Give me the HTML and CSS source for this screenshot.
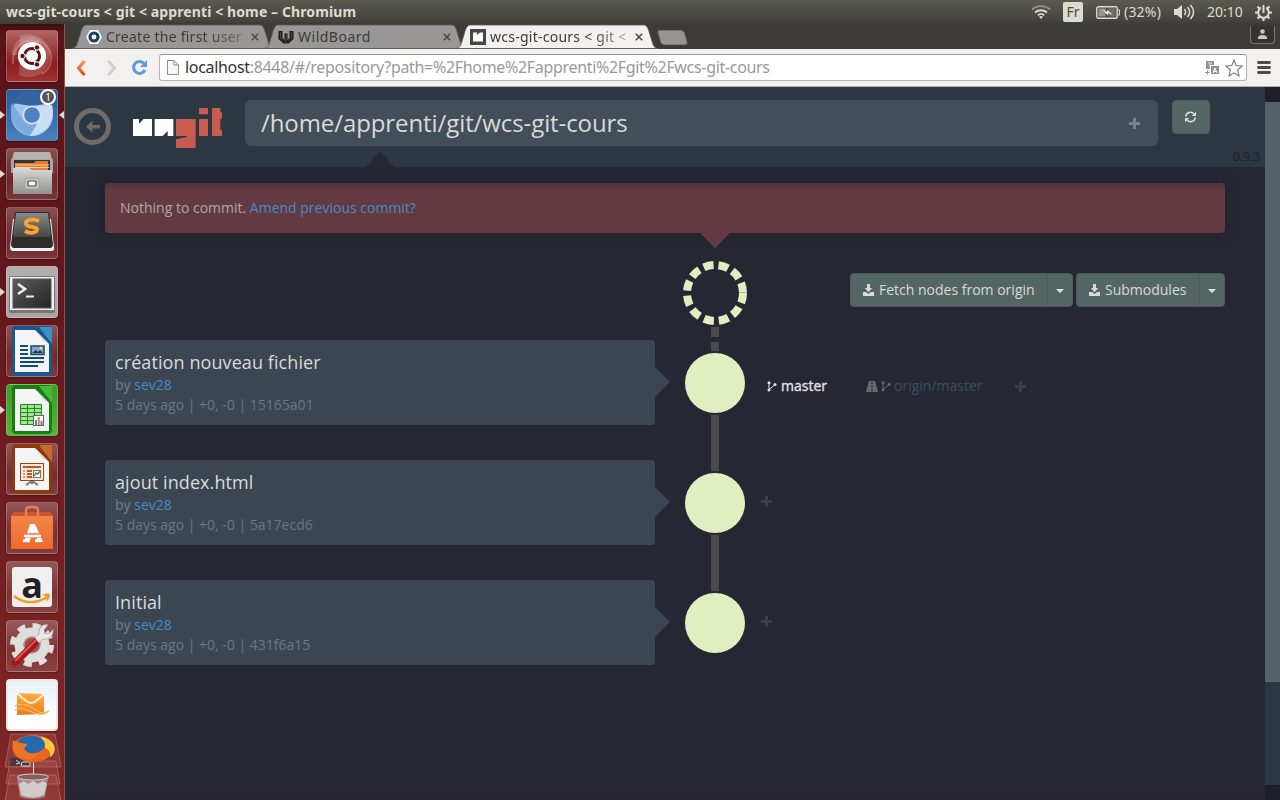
FILE: index.html
```html
<!DOCTYPE html>
<html lang="fr">
<head>
<meta charset="utf-8">
<title>wcs-git-cours &lt; git &lt; apprenti &lt; home</title>
<link rel="stylesheet" href="styles.css">
</head>
<body>
<svg class="defs" width="0" height="0" aria-hidden="true">
  <defs>
    <linearGradient id="steel" x1="0" y1="0" x2="0" y2="1"><stop offset="0" stop-color="#d8d8d6"/><stop offset="1" stop-color="#929292"/></linearGradient>
    <linearGradient id="dark" x1="0" y1="0" x2="1" y2="1"><stop offset="0" stop-color="#5c5c5c"/><stop offset="1" stop-color="#242424"/></linearGradient>
    <linearGradient id="key" x1="0" y1="0" x2="0" y2="1"><stop offset="0" stop-color="#888"/><stop offset="1" stop-color="#474747"/></linearGradient>
    <linearGradient id="orange" x1="0" y1="0" x2="0" y2="1"><stop offset="0" stop-color="#f5854a"/><stop offset="1" stop-color="#ee6a2a"/></linearGradient>
    <linearGradient id="mail" x1="0" y1="0" x2="0" y2="1"><stop offset="0" stop-color="#fcb23c"/><stop offset="1" stop-color="#ef7a22"/></linearGradient>
    <linearGradient id="back" x1="0" y1="0" x2="0" y2="1"><stop offset="0" stop-color="#f0975d"/><stop offset="1" stop-color="#dc4a1c"/></linearGradient>
    <symbol id="plus" viewBox="0 0 11 11"><path d="M4 0h3v4h4v3H7v4H4V7H0V4h4z" fill="currentColor"/></symbol>
    <symbol id="branch" viewBox="0 0 10 11"><g fill="currentColor"><circle cx="2" cy="1.700" r="1.500"/><circle cx="2" cy="9" r="1.500"/><circle cx="8" cy="3.500" r="1.500"/></g><path d="M2 2v7M2.500 8 5 6.200 7.500 4" fill="none" stroke="currentColor" stroke-width="1"/></symbol>
    <symbol id="save" viewBox="0 0 11 12"><path d="M4 0h3v4h2.200L5.500 8.300 1.800 4H4zM0 8h3l2.500 2L8 8h3v4H0z" fill="currentColor"/></symbol>
    <symbol id="cross" viewBox="0 0 8 8"><path d="m.8.800 6.400 6.400M7.200.800.800 7.200" stroke="currentColor" stroke-width="1.500"/></symbol>
    <symbol id="tab" viewBox="0 0 202 25"><path d="M0 24.500C5 24 5 20 7 14S10 1 14 1h174c4 0 5 7 7 13s2 10 7 10.500z" fill="currentColor" stroke="#5b5a57" stroke-width=".8"/></symbol>
  </defs>
</svg>

<header class="panel">
  <span class="panel-title">wcs-git-cours &lt; git &lt; apprenti &lt; home – Chromium</span>
  <div class="indicators">
    <svg class="wifi" width="20" height="14" viewBox="0 0 20 14"><g fill="none" stroke="#dfdbd2" stroke-width="1.800"><path d="M1 4.500C6 0 14 0 19 4.500" opacity=".5"/><path d="M4 7.500c3.500-3 8.500-3 12 0M6.800 10.300c2-1.700 4.400-1.700 6.400 0"/></g><path d="m10 14-2-2.200c1-1 3-1 4 0z" fill="#dfdbd2"/></svg>
    <span class="lang">Fr</span>
    <svg class="battery" width="24" height="13" viewBox="0 0 24 13"><rect x=".8" y=".8" width="20.400" height="11.400" rx="1.500" fill="none" stroke="#dfdbd2" stroke-width="1.400"/><path d="M22 4h1.500v5H22" fill="none" stroke="#dfdbd2"/><path d="M2.500 2.500h7v8h-7z" fill="#dfdbd2" opacity=".5"/><path d="M12 2.500h7.500v8H12z" fill="#dfdbd2" opacity=".25"/><path d="m6 3 5 3V4l6 5-5-2v2.500z" fill="#f4f1ea"/></svg>
    <span class="percent">(32%)</span>
    <svg class="volume" width="21" height="16" viewBox="0 0 21 16"><path d="M0 5h3l5-4v14l-5-4H0z" fill="#dfdbd2"/><path d="M10.500 5c1.500 2 1.500 4 0 6M13.500 3c3 3.500 3 6.500 0 10M16.500 1c4 4.500 4 9.500 0 14" fill="none" stroke="#dfdbd2" stroke-width="1.500"/></svg>
    <span class="clock">20:10</span>
    <svg class="power" width="17" height="17" viewBox="0 0 17 17"><circle cx="8.500" cy="8.500" r="5.300" fill="none" stroke="#dfdbd2" stroke-width="2"/><path d="M8.500 14v3M0 8.500h3M14 8.500h3M2.500 2.500l2 2M14.500 2.500l-2 2M2.500 14.500l2-2M14.500 14.500l-2-2" stroke="#dfdbd2" stroke-width="2.200"/><path d="M8.500 0v8.500" stroke="#504e46" stroke-width="5"/><path d="M8.500 1v8" stroke="#dfdbd2" stroke-width="2"/></svg>
  </div>
</header>

<div class="desktop">
  <nav class="launcher">
    <div class="tile ubuntu"><svg viewBox="0 0 52 52"><path d="M7 34C6 15 20 6 37 13c14 10 8 27-2 31" fill="none" stroke="#d58380" stroke-width="2" opacity=".5"/><path d="M13 45c18 8 34-8 31-24C41 10 30 2 14 5" fill="#fff" opacity=".17"/><path d="M8 25C8 12 22 5 34 12" fill="none" stroke="#fff" stroke-width="5" opacity=".18"/><circle cx="26" cy="26" r="14" fill="#fff"/><circle cx="26" cy="26" r="7.500" fill="none" stroke="#5b1416" stroke-width="3" stroke-dasharray="13.700 2" stroke-dashoffset="6.500"/><g fill="#5b1416" stroke="#fff"><circle cx="16.500" cy="26" r="2.700"/><circle cx="31" cy="17.500" r="2.700"/><circle cx="31" cy="34.500" r="2.700"/></g></svg></div>
    <div class="tile chromium running focused"><svg viewBox="0 0 52 52"><circle cx="26" cy="26" r="21" fill="#a5c6ec"/><path d="M6 14A22 22 0 0 1 46 14L26 17z" fill="#34639d"/><path d="M6 14c-4 14 2 28 18 33l8-12-14-3z" fill="#7cabe2"/><path d="M46 16c4 14-4 29-22 31l10-17-3-13z" fill="#c9def5"/><circle cx="26" cy="26" r="9.500" fill="#d4e3f5"/><circle cx="26" cy="26" r="7.800" fill="#4f80c4"/></svg><span class="badge">1</span></div>
    <div class="tile wine running"><svg viewBox="0 0 52 52"><path d="M8 4h36l3 11H5z" fill="#b4b4b2"/><path d="M5 11h42v14H5z" fill="#a8a8a6"/><path d="M8 12h36v12H8z" fill="#343434"/><path d="M9 15h19l2-2h12v10H9z" fill="#e37b34"/><path d="M9 17h34M9 19.500h34" stroke="#ffd2a0"/><path d="M7 20h16l3 2h20v24H7z" fill="url(#steel)"/><rect x="19" y="30" width="14" height="11" rx="2" fill="#c8c8c6" stroke="#a0a09e"/><rect x="22" y="33" width="8" height="5" rx="1" fill="#fff" stroke="#444" stroke-width="1.200"/></svg></div>
    <div class="tile wine"><svg viewBox="0 0 52 52"><path d="M7 12 4 40q0 4 3 4h38q4 0 3-4L45 12z" fill="#f2f2f2"/><path d="M9 5h34l4 32q0 4-3 4H8q-3 0-3-4z" fill="#2d2d2d"/><path d="M10 6h32l3 22q0 2-2 2H9q-2 0-2-2z" fill="url(#key)"/><path d="M33 14c-7-3-14-1-13 3s12 2 11 6c-1 3-7 4-12 1" fill="none" stroke="#ffa02c" stroke-width="3.800"/></svg></div>
    <div class="tile grey running"><svg viewBox="0 0 52 52"><rect x="3" y="10" width="46" height="37" rx="2" fill="#777"/><rect x="4" y="11" width="44" height="33" fill="#eee"/><rect x="7" y="13" width="38" height="29" fill="url(#dark)" stroke="#555"/><path d="m12 18 7 5-7 5" fill="none" stroke="#eee" stroke-width="2.600"/><path d="M20 30.500h8" stroke="#eee" stroke-width="2"/></svg></div>
    <div class="tile wine"><svg viewBox="0 0 52 52"><rect x="6" y="1" width="40" height="50" rx="4" fill="#17588f"/><path d="M33 2h13v17z" fill="#3b91c7"/><path d="M9 5h20l14 14v28H9z" fill="#f4f4f4"/><path d="m29 5 14 14-6-3z" fill="#ddd"/><path d="M14 21h8M14 25h8M14 29h8M14 33h24M14 37h24M14 41h18" stroke="#0d4c80" stroke-width="2"/><rect x="25" y="21" width="13" height="8.500" fill="#77aed5" stroke="#174567" stroke-width="1.500"/><path d="m26 28 4-3 2 2 2-2 3 3" fill="#333"/><circle cx="35" cy="23" r="1.500" fill="#ffd65e"/></svg></div>
    <div class="tile green running"><svg viewBox="0 0 52 52"><rect x="6" y="1" width="40" height="49" rx="4" fill="#177f0d"/><path d="M33 2h13v17z" fill="#46ba34"/><path d="M9 5h20l14 14v28H9z" fill="#f4f4f4"/><path d="m29 5 14 14-6-3z" fill="#ddd"/><path d="M14.500 20.500h21v20h-21z" fill="#a9df9c" stroke="#1d8b13"/><path d="M14 24.500h22M14 28.500h22M14 32.500h22M14 36.500h22M21.500 20v20M28.500 20v20" stroke="#1d8b13"/><rect x="27.500" y="31.500" width="10" height="10" fill="#fff" stroke="#666"/><path d="M30 36v5M35.500 37v4" stroke="#438bc8" stroke-width="2"/><path d="M32.700 33v8" stroke="#e8792d" stroke-width="2"/></svg></div>
    <div class="tile wine"><svg viewBox="0 0 52 52"><rect x="6" y="1" width="40" height="49" rx="4" fill="#8c3a0a"/><path d="M33 2h13v17z" fill="#c76a32"/><path d="M9 5h20l14 14v28H9z" fill="#f4f4f4"/><path d="m29 5 14 14-6-3z" fill="#ddd"/><path d="M20 42l6-4 6 4M26 38v3" fill="none" stroke="#777" stroke-width="2"/><rect x="14.500" y="20.500" width="23" height="17" fill="#fbe8dc" stroke="#a14614"/><path d="M17 24h18M21 28h5M21 31h5M21 34h5" stroke="#bb5a25" stroke-width="2"/><path d="M17 28h2M17 31h2M17 34h2" stroke="#e79b6d" stroke-width="2"/><rect x="27.500" y="27.500" width="7" height="7" fill="#fff" stroke="#777"/><path d="m28 33 2-3 2 1 2-3" fill="none" stroke="#4b9d34" stroke-width="1.400"/></svg></div>
    <div class="tile wine"><svg viewBox="0 0 52 52"><path d="M5 14h42v33H5z" fill="url(#orange)"/><path d="m5 14 3-4h36l3 4z" fill="#c8582c"/><path d="M20 17V9q0-4 3-4h6q3 0 3 4v8" fill="none" stroke="#e87c4d" stroke-width="2.500"/><path d="M18 40h5l5-10 5 10h4L29 22h-5l-6 18z" fill="#fff"/><path d="M17 33.500h19" stroke="#ee7336" stroke-width="4.500"/><path d="M18 34h17" stroke="#fff" stroke-width="2.600"/><path d="M17 38.700h7M29 38.700h6" stroke="#fff" stroke-width="3"/></svg></div>
    <div class="tile wine amazon"><span class="amazon-plate">a</span><svg viewBox="0 0 52 52"><path d="M8 35c10 8 23 8 33 1" fill="none" stroke="#f79b1c" stroke-width="2.300"/><path d="M36 34c4-2 8-2 8 0 0 3-2 5-4 7 1-3 2-5-4-7z" fill="#f79b1c"/></svg></div>
    <div class="tile wine"><svg viewBox="0 0 52 52"><circle cx="26" cy="25" r="19.500" fill="none" stroke="#e0e0de" stroke-width="5" stroke-dasharray="8 7.310"/><circle cx="26" cy="25" r="13" fill="none" stroke="#dededc" stroke-width="9"/><circle cx="26" cy="25" r="8" fill="#a44b4c" stroke="#aaa"/><path d="M9 43 31 21" stroke="#a3191d" stroke-width="7" stroke-linecap="round"/><path d="M9 41 30 20" stroke="#e05653" stroke-width="2"/><path d="m29 18 4-4c-1-6 4-11 9-9l-4 5 1 4 5-1 3-4c1 7-4 11-10 10l-4 4z" fill="#e8e8e8" stroke="#999" stroke-width=".7"/></svg></div>
    <div class="tile hotmail"><svg viewBox="0 0 52 52"><path d="m11 14 27 1v20l-27 1z" fill="url(#mail)"/><path d="M11 14c7 7 11 10 14 10s7-3 13-9" fill="none" stroke="#fff3df" stroke-width="1.800"/><path d="M9 27c7-4 16 0 21 4s10 3 13 1M9 31c6-4 13 1 20 3s9 1 13-1" fill="none" stroke="#f9b352" stroke-width="1.300"/></svg></div>
    <svg class="folded" width="60" height="69" viewBox="0 0 60 69"><g fill="#b7635d" fill-opacity=".3" stroke="#c98a82" stroke-opacity=".5"><path d="M8 1h44l6 33H2z"/><path d="M7 28h46l4 23H3z"/><path d="M7 42h46l5 26H2z"/></g><path d="M8 25h20v8H6z" fill="#31343a" opacity=".8"/><path d="m13 27 4 3-4 1M19 29h8v4h-9z" stroke="#ddd" fill="none"/><ellipse cx="30" cy="15.500" rx="20.500" ry="13.500" fill="#e96520"/><path d="M38 3.500c14 3 18 14 9 21 1-6-2-8-5-10z" fill="#fcc93a"/><ellipse cx="28" cy="11.500" rx="14" ry="9" fill="#2668ae"/><path d="M10 7.500c7 2 11 4 15 3l-4 5c4 6 10 6 16 4-5 9-20 8-25 0-3-4-3-8-2-12z" fill="#ee7525"/><path d="M30.500 29v15" stroke="#ddd"/><path d="m14 44 3 20q13 4 25 0l3-20z" fill="#aaa" opacity=".7"/><path d="m16 51 5-3 4 3 5-3 5 3 5-3 4 3-3 11q-11 5-23 0z" fill="#eee" opacity=".65"/><ellipse cx="30" cy="44" rx="15.500" ry="3" fill="#8a5a57" stroke="#ccc"/></svg>
  </nav>

  <main class="browser">
    <div class="tabstrip">
      <div class="tab"><svg class="tab-shape"><use href="#tab"/></svg><svg class="favicon" viewBox="0 0 16 16"><path d="M4 1h8l4 7-4 7H4L0 8z" fill="#fff"/><circle cx="8" cy="8" r="4" fill="none" stroke="#1d4161" stroke-width="3.200"/></svg><span class="tab-label fade">Create the first user</span><svg class="close" width="8" height="8"><use href="#cross"/></svg></div>
      <div class="tab"><svg class="tab-shape"><use href="#tab"/></svg><svg class="favicon" viewBox="0 0 16 16"><path d="M.500 2h4v7l2 2V4.500h3V11l2-2V2h4v8l-5 4.500H5.500L.500 10z" fill="#1d1d1d"/><path d="M2.500 3v6l3 3M8 6v8M13.500 3v6l-3 3" stroke="#777" fill="none" stroke-width=".5"/></svg><span class="tab-label wide">WildBoard</span><svg class="close" width="8" height="8"><use href="#cross"/></svg></div>
      <div class="tab active"><svg class="tab-shape"><use href="#tab"/></svg><svg class="favicon" viewBox="0 0 16 16"><path d="M0 0h16v16H0z" fill="#464646"/><path d="M3 3.500h4V6l3-2.500h3v9H3z" fill="#fff"/></svg><span class="tab-label fade">wcs-git-cours &lt; git &lt;</span><svg class="close" width="8" height="8"><use href="#cross"/></svg></div>
      <svg class="new-tab" width="31" height="15" viewBox="0 0 31 15"><path d="M2 .500h22q2 0 3 2l3 10q0 2-1 2H7q-2 0-3-2L1 2q0-1.500 1-1.500z" fill="#969593" stroke="#777"/></svg>
      <div class="user"><svg width="9" height="10" viewBox="0 0 9 10"><circle cx="4.500" cy="2.500" r="2.300" fill="#c8c7c5"/><path d="M0 10V8q1-2 4.500-2T9 8v2z" fill="#c8c7c5"/></svg></div>
    </div>
    <div class="toolbar">
      <svg class="nav-back" width="10" height="16" viewBox="0 0 10 16"><path d="M8.500 1 2.500 8l6 7" fill="none" stroke="url(#back)" stroke-width="3"/></svg>
      <svg class="nav-next" width="10" height="16" viewBox="0 0 10 16"><path d="m1.500 1 6 7-6 7" fill="none" stroke="#cfcecb" stroke-width="3"/></svg>
      <svg class="nav-reload" width="17" height="17" viewBox="0 0 17 17"><path d="M13.500 5A6 6 0 1 0 14 11" fill="none" stroke="#5e9cd8" stroke-width="3"/><path d="M16 1v7H9z" fill="#5e9cd8"/></svg>
      <div class="omnibox">
        <svg class="doc" width="12" height="15" viewBox="0 0 12 15"><path d="M.500.500H7L11.500 5v9.500H.500z" fill="#f6f6f6" stroke="#8d8d8d"/><path d="M7 .500V5h4.500" fill="none" stroke="#8d8d8d"/></svg>
        <span class="url">localhost<i>:8448/#/repository?path=%2Fhome%2Fapprenti%2Fgit%2Fwcs-git-cours</i></span>
        <svg class="translate" width="14" height="14" viewBox="0 0 14 14"><path d="M1 0h8v4H5v4H1zM6 5h8v8H6z" fill="#929292"/><path d="M3 2h4M5 2v4" stroke="#ddd"/><path d="m8 12 2-5 2 5M9 10.500h2" fill="none" stroke="#fff"/><path d="M0 11.500h4.500M2.500 9.500v4" stroke="#929292"/></svg>
        <svg width="18" height="18" viewBox="0 0 18 18"><path d="m9 1 2.200 5.500 6 .5-4.600 4 1.400 6-5-3.200L4 17l1.400-6L.800 7l6-.5z" fill="#fff" stroke="#777" stroke-width="1.100"/></svg>
      </div>
      <svg class="menu" width="14" height="13" viewBox="0 0 14 13"><path d="M1.500 1.500h11M1.500 6.500h11M1.500 11.500h11" stroke="#4d4d4d" stroke-width="2.800" stroke-linecap="round"/></svg>
    </div>

    <div class="viewport">
      <div class="page">
        <header class="app-header">
          <svg class="home" width="37" height="37" viewBox="0 0 37 37"><circle cx="18.500" cy="18.500" r="16" fill="none" stroke="#6d6c6b" stroke-width="5"/><path d="M12 18.500 18.500 13v4H26v3.500h-7.500v4z" fill="#6d6c6b"/></svg>
          <svg class="logo" width="89" height="40" viewBox="204 69 267 120"><path d="M204 102h18v14l14-14h25v51h-57zM269 102h56v51h-17v-15l-15 15h-24z" fill="#fff"/><path d="M333 102h59v87h-59v-26l33-7-1-3h-32zM402 69h27v19h-27zM402 102h27v51h-27zM441 69h25v13h5v20h-5v34h5v17h-30z" fill="#c65b4f"/></svg>
          <div class="path-box"><span>/home/apprenti/git/wcs-git-cours</span><svg width="11" height="11"><use href="#plus"/></svg></div>
          <button class="refresh"><svg width="11" height="12" viewBox="0 0 11 12"><path d="M.8 5.500C1 1 6.500 0 9 3M10.200 6.500C10 11 4.500 12 2 9" fill="none" stroke="#e0e0e0" stroke-width="1.500"/><path d="M11 .800V5H6.800zM0 11.200V7h4.200z" fill="#e0e0e0"/></svg></button>
          <span class="version">0.9.3</span>
        </header>
        <section class="content">
          <div class="staging">Nothing to commit. <a>Amend previous commit?</a></div>
          <div class="history">
            <div class="commits">
              <article class="commit"><h2>création nouveau fichier</h2><p>by <a>sev28</a></p><p class="meta">5 days ago | +0, -0 | 15165a01</p></article>
              <article class="commit"><h2>ajout index.html</h2><p>by <a>sev28</a></p><p class="meta">5 days ago | +0, -0 | 5a17ecd6</p></article>
              <article class="commit"><h2>Initial</h2><p>by <a>sev28</a></p><p class="meta">5 days ago | +0, -0 | 431f6a15</p></article>
            </div>
            <svg class="graph" width="90" height="440" viewBox="0 0 90 440"><path d="M41 94h8v10h-8zM41 109h8v9h-8zM41 182h8v56h-8zM41 302h8v56h-8z" fill="#4b4b4b"/><circle cx="45" cy="60" r="28" fill="none" stroke="#e1eebf" stroke-width="8" stroke-dasharray="10 5" pathLength="175.300"/><g fill="#e1eebf"><circle cx="45" cy="150" r="30"/><circle cx="45" cy="270" r="30"/><circle cx="45" cy="390" r="30"/></g></svg>
            <div class="refs">
              <div class="actions">
                <div class="btn-group"><button class="btn fetch"><svg width="11" height="12"><use href="#save"/></svg>Fetch nodes from origin</button><button class="btn caret"><i></i></button></div>
                <div class="btn-group"><button class="btn sub"><svg width="11" height="12"><use href="#save"/></svg>Submodules</button><button class="btn caret"><i></i></button></div>
              </div>
              <div class="ref-row first-row">
                <span class="ref current"><svg width="10" height="11"><use href="#branch"/></svg>master</span>
                <span class="ref remote"><svg width="12" height="11" viewBox="0 0 12 11"><path d="M3 0h6l3 11H0z" fill="currentColor"/><path d="M6 1v2M6 4.500v2M6 8v2.500" stroke="#252833" stroke-width="1.300"/></svg><svg width="10" height="11"><use href="#branch"/></svg>origin/master</span>
                <svg class="add" width="11" height="11"><use href="#plus"/></svg>
              </div>
              <div class="ref-row"><svg class="add" width="11" height="11"><use href="#plus"/></svg></div>
              <div class="ref-row"><svg class="add" width="11" height="11"><use href="#plus"/></svg></div>
            </div>
          </div>
        </section>
      </div>
      <div class="scrollbar"><div class="thumb"></div></div>
    </div>
  </main>
</div>
</body>
</html>
```
FILE: styles.css
```css
* { box-sizing: border-box; }
body { margin: 0; width: 1280px; height: 800px; overflow: hidden; display: flex; flex-direction: column; font-family: "Open Sans", sans-serif; background: #252833; }
svg { display: block; flex: none; }
.defs { position: absolute; }
h2, p { margin: 0; font-weight: 400; }
button { font: inherit; margin: 0; padding: 0; }
i { font-style: normal; }

.panel { height: 24px; flex: none; display: flex; align-items: center; justify-content: space-between; padding: 0 8px 0 6px; background: linear-gradient(#5b5950, #45443d 85%, #3c3b37); color: #dfdbd2; font-family: "Noto Sans", sans-serif; font-size: 14px; line-height: 24px; white-space: nowrap; }
.panel-title { font-weight: 700; font-size: 14px; letter-spacing: .11px; }
.indicators { display: flex; align-items: center; }
.lang { width: 20px; height: 20px; margin: 0 13px 0 12px; border-radius: 2px; background: #dfdbd2; color: #4a4840; text-align: center; line-height: 20px; }
.percent { margin: 0 12px 0 4px; width: 38px; letter-spacing: .2px; }
.clock { margin: 0 11px 0 12px; width: 37px; }

.desktop { flex: 1; display: flex; min-height: 0; }
.launcher { width: 65px; flex: none; display: flex; flex-direction: column; gap: 7px; padding: 6px 6px 0; border-right: 1px solid #94524c; background: linear-gradient(#3d1113, #5a1317 8px, #64181b 35%, #802727); overflow: hidden; }
.tile { width: 52px; height: 52px; flex: none; position: relative; border-radius: 4px; border: 1px solid rgba(255,255,255,.2); background: linear-gradient(rgba(255,255,255,.25), rgba(255,255,255,.08) 60%, rgba(255,255,255,.14)); box-shadow: 0 1px 2px rgba(0,0,0,.3); }
.tile > svg { width: 52px; height: 52px; margin: -1px; }
.ubuntu { background: linear-gradient(#b06463, #8d1d20 65%, #a13235); }
.chromium { background: linear-gradient(#2c5d96, #396eac 60%, #4a81bf); }
.grey { background: linear-gradient(#b5adad, #aaa3a2); }
.green { background: linear-gradient(#3e9b2d, #57b43e); }
.hotmail { background: linear-gradient(#e4f1fa, #fff 75%); border: 2px solid #eee5e5; }
.hotmail > svg { margin: -2px; }
.running::before { content: ""; position: absolute; left: -7px; top: 21px; border: 4px solid transparent; border-left: 5px solid #ded5d5; border-right: 0; }
.focused::after { content: ""; position: absolute; right: -7px; top: 21px; border: 4px solid transparent; border-right: 5px solid #ded5d5; border-left: 0; }
.badge { position: absolute; left: 33px; top: -1px; width: 16px; height: 16px; border-radius: 50%; border: 2px solid #fff; background: #555; color: #fff; font: 10px/12px "Noto Sans", sans-serif; text-align: center; }
.amazon { display: grid; }
.amazon > * { grid-area: 1 / 1; }
.amazon-plate { width: 40px; height: 40px; margin: 5px; border-radius: 3px; background: #f0f0f0; color: #222; font: 700 36px/35px "Open Sans", sans-serif; text-align: center; }
.folded { margin: -5px 0 0 -3px; }

.browser { flex: 1; min-width: 0; display: flex; flex-direction: column; }
.tabstrip { height: 25px; flex: none; display: flex; padding-left: 7px; background: #3c3b37; color: #989795; font: 14px/24px "Noto Sans", sans-serif; }
.tab { position: relative; width: 202px; margin-right: -10px; display: flex; align-items: center; padding: 1px 15px 0 14px; }
.tab-shape { position: absolute; left: 0; top: 0; width: 202px; height: 25px; }
.favicon { position: relative; width: 16px; height: 16px; margin-right: 4px; }
.tab-label { position: relative; width: 140px; color: #3c3b37; letter-spacing: .25px; white-space: nowrap; overflow: hidden; }
.tab-label.wide { letter-spacing: .5px; }
.fade { -webkit-mask-image: linear-gradient(90deg, #000 72%, rgba(0,0,0,.3)); mask-image: linear-gradient(90deg, #000 72%, rgba(0,0,0,.3)); }
.close { position: relative; margin-left: 5px; color: #4a4946; }
.active { color: #f2f1f0; z-index: 1; }
.new-tab { margin: 6px 0 0 9px; }
.user { width: 25px; height: 18px; margin: 2px 5px 0 auto; border: 1px solid #777; border-top: 0; border-radius: 0 0 4px 4px; background: #343330; display: flex; justify-content: center; padding-top: 3px; }
.toolbar { height: 38px; flex: none; display: flex; align-items: center; padding: 0 9px 0 11px; background: #f2f1f0; border-bottom: 1px solid #b1b0ae; }
.nav-next { margin-left: 21px; }
.nav-reload { margin-left: 14px; }
.omnibox { width: 1089px; height: 27px; margin: 0 10px 0 11px; display: flex; align-items: center; padding: 0 3px 0 7px; border: 1px solid #b5b4b2; border-top-color: #999; border-radius: 3px; background: #fff; }
.url { flex: 1; margin-left: 6px; color: #333; font: 16px/24px "Noto Sans", sans-serif; letter-spacing: -.32px; white-space: nowrap; padding-bottom: 1px; }
.url i { color: #999; }
.translate { margin-right: 6px; }

.viewport { flex: 1; display: flex; min-height: 0; }
.page { width: 1200px; background: #252833; border-bottom: 2px solid #272330; }
.app-header { height: 80px; position: relative; display: flex; align-items: flex-start; padding: 13px 5px 0 9px; background: #2c3742; }
.app-header::after { content: ""; position: absolute; left: 300px; bottom: 0; border: 15px solid transparent; border-top: 0; border-bottom-color: #252833; }
.home { margin-top: 8px; }
.logo { margin: 8px 0 0 22px; }
.path-box { width: 913px; height: 46px; margin-left: 23px; padding: 0 18px 0 16px; display: flex; align-items: center; justify-content: space-between; border-radius: 6px; background: #424f58; color: #d9dadb; font-size: 24px; letter-spacing: -.09px; }
.path-box span { padding-bottom: 2px; }
.path-box svg { color: #77818a; }
.refresh { width: 38px; height: 34px; margin-left: 14px; padding-right: 2px; border: 1px solid #4d5e5c; border-radius: 4px; background: #546664; display: flex; align-items: center; justify-content: center; }
.version { position: absolute; right: 5px; bottom: 2px; color: #1c2025; font-size: 12px; line-height: 17px; }
.content { padding: 16px 40px; color: #b6a5ab; font-size: 14px; }
.content a { color: #428bca; }
.staging { position: relative; height: 50px; line-height: 50px; padding-left: 15px; border-radius: 4px; background: linear-gradient(#56313d, #633942 8px); box-shadow: 0 0 12px rgba(20,22,30,.4); }
.staging::after { content: ""; position: absolute; left: 595px; top: 50px; border: 15px solid transparent; border-bottom: 0; border-top-color: #633942; }
.history { display: flex; }
.commits { width: 550px; padding-top: 107px; display: flex; flex-direction: column; gap: 35px; }
.commit { position: relative; height: 85px; padding: 12px 10px; border-radius: 4px; background: #3c4650; color: #77818a; line-height: 20px; }
.commit::after { content: ""; position: absolute; left: 550px; top: 27px; border: 15px solid transparent; border-right: 0; border-left-color: #3c4650; }
.commit h2 { color: #d9dadb; font-size: 18px; line-height: 20px; margin-bottom: 3px; letter-spacing: .09px; }
.commit .meta { color: #6d7680; }
.graph { margin-left: 15px; }
.refs { width: 465px; padding-top: 40px; }
.actions { display: flex; justify-content: flex-end; gap: 3px; }
.btn-group { display: flex; }
.btn { height: 34px; display: flex; align-items: center; padding-bottom: 2px; border: 1px solid #4b5c5a; background: #546664; color: #d9dadb; white-space: nowrap; }
.btn svg { margin: 2px 5px 0 0; }
.fetch { width: 198px; padding-left: 12px; border-radius: 4px 0 0 4px; }
.sub { width: 124px; padding-left: 12px; border-radius: 4px 0 0 4px; }
.caret { width: 26px; margin-left: -1px; padding-bottom: 0; justify-content: center; border-radius: 0 4px 4px 0; }
.caret i { margin-top: 2px; border: 4px solid transparent; border-top-color: #e4e4e4; border-bottom: 0; }
.ref-row { height: 120px; display: flex; align-items: flex-start; padding: 55px 0 0 1px; }
.first-row { padding: 69px 0 0 7px; height: 134px; line-height: 20px; }
.ref { display: flex; align-items: center; }
.ref svg { margin-right: 4px; }
.current { width: 99px; color: #e2e2e4; -webkit-text-stroke: .35px #e2e2e4; }
.remote { width: 149px; color: #3b4d61; }
.remote svg { color: #686b72; margin-right: 3px; }
.add { color: #3b3e48; }
.first-row .add { margin-top: 5px; }
.scrollbar { width: 15px; padding: 15px 0; background: linear-gradient(#1d1f29 15px, #2b3842 15px, #2b3842 698px, #1d1f29 698px); }
.thumb { height: 580px; background: #56616a; }
```
